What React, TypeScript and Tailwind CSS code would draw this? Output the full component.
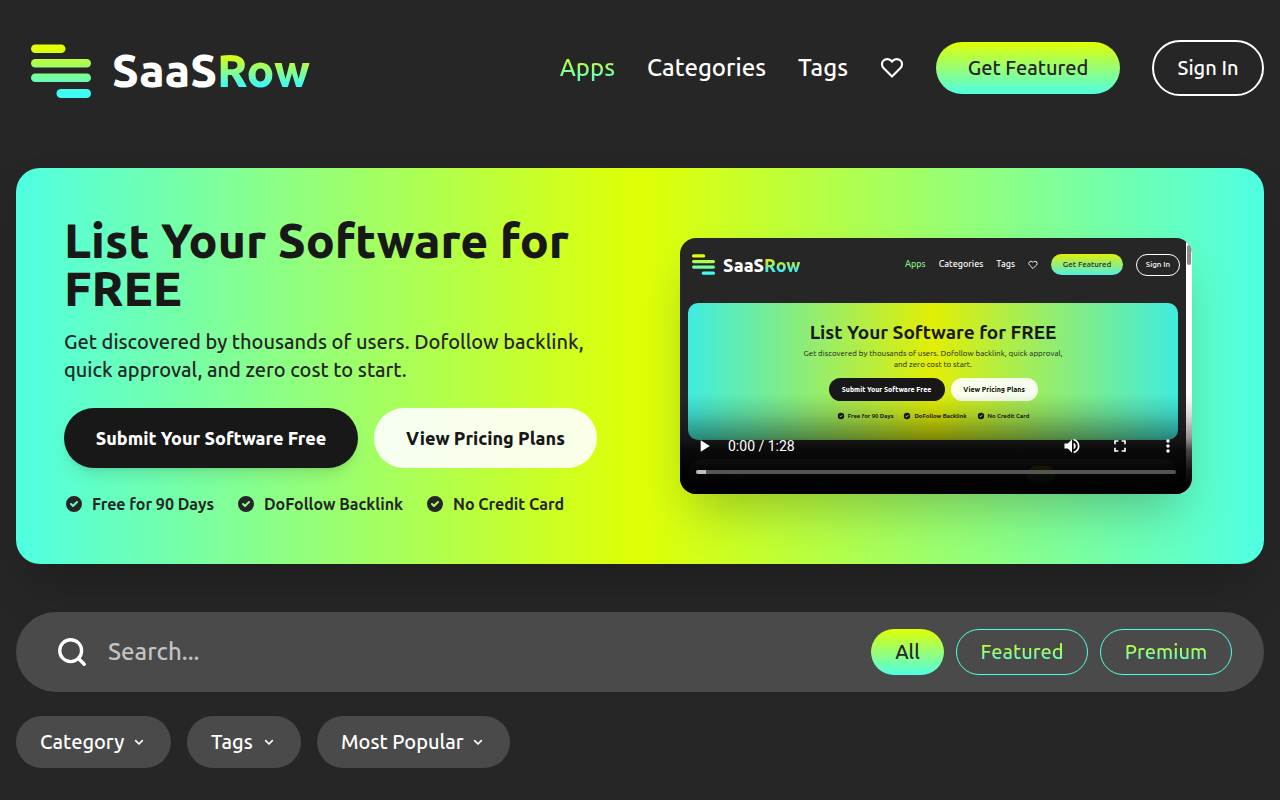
import React, { useState } from "react";

const filters = [
  { name: "All", width: "w-[73px]" },
  { name: "Featured", width: "w-[132px]" },
  { name: "Premium", width: "w-[132px]" },
];

const dropdowns = [
  { label: "Category", width: "w-[155px]", options: ["Category", "Marketing", "Design"] },
  { label: "Tags", width: "w-[114px]", options: ["Tags", "AI", "Free"] },
  { label: "Most Popular", width: "w-[193px]", options: ["Most Popular", "Newest"] },
];

const perks = ["Free for 90 Days", "DoFollow Backlink", "No Credit Card"];

function LogoMark({ className, id }: { className: string; id: string }) {
  return (
    <svg viewBox="0 0 60 54" className={className} fill={`url(#${id})`} aria-hidden="true">
      <defs>
        <linearGradient id={id} gradientUnits="userSpaceOnUse" x1="0" y1="0" x2="0" y2="54">
          <stop offset="0.1" stopColor="#E0FF04" />
          <stop offset="0.9" stopColor="#3EFBF5" />
        </linearGradient>
      </defs>
      <rect x="0" y="0.5" width="34.5" height="8.5" rx="4.25" />
      <rect x="0" y="15" width="60" height="8.5" rx="4.25" />
      <rect x="0" y="29.5" width="60" height="8.5" rx="4.25" />
      <rect x="25.5" y="45" width="34.5" height="9" rx="4.5" />
    </svg>
  );
}

function HeartIcon({ className }: { className: string }) {
  return (
    <svg viewBox="-0.5 -0.2 25 25" className={className} fill="none" stroke="currentColor" strokeWidth="2.2" strokeLinecap="round" strokeLinejoin="round" aria-hidden="true">
      <path d="M20.84 4.61a5.5 5.5 0 0 0-7.78 0L12 5.67l-1.06-1.06a5.5 5.5 0 0 0-7.78 7.78l1.06 1.06L12 21.23l7.78-7.78 1.06-1.06a5.5 5.5 0 0 0 0-7.78z" />
    </svg>
  );
}

function CheckIcon({ className }: { className: string }) {
  return (
    <svg viewBox="0 0 20 20" className={className} fill="currentColor" aria-hidden="true">
      <path
        fillRule="evenodd"
        clipRule="evenodd"
        d="M10 18a8 8 0 100-16 8 8 0 000 16zm3.707-9.293a1 1 0 00-1.414-1.414L9 10.586 7.707 9.293a1 1 0 00-1.414 1.414l2 2a1 1 0 001.414 0l4-4z"
      />
    </svg>
  );
}

function PlayerIcon({ d }: { d: string }) {
  return (
    <svg viewBox="0 0 24 24" className="size-5" fill="currentColor" aria-hidden="true">
      <path d={d} />
    </svg>
  );
}

function Header() {
  return (
    <header className="flex h-[136px] items-center justify-between px-4">
      <a href="#" className="flex items-center gap-[21px] pt-1.5 pl-[15px]">
        <LogoMark id="logo" className="h-[54px] w-[60px]" />
        <span className="pb-0.5 text-[46px] leading-[52px] font-extrabold text-white">
          SaaS
          <span className="bg-linear-to-b/srgb from-[#E0FF04] from-20% to-[#3EFBF5] to-80% bg-clip-text text-transparent">Row</span>
        </span>
      </a>
      <nav className="flex items-center gap-8 text-2xl text-white">
        <a href="#" className="bg-linear-to-b/srgb from-[#E0FF04] to-[#4FFFE3] bg-clip-text text-transparent">Apps</a>
        <a href="#">Categories</a>
        <a href="#">Tags</a>
        <a href="#" aria-label="Favorites">
          <HeartIcon className="size-6" />
        </a>
        <button className="h-[52px] w-[184px] rounded-full bg-linear-to-b/srgb from-[#E0FF04] to-[#4FFFE3] text-xl text-[#262626]">
          Get Featured
        </button>
        <button className="h-14 w-28 rounded-full border-2 border-white text-xl">Sign In</button>
      </nav>
    </header>
  );
}

// the page as it shows in the first frame of the demo video
function VideoFrame() {
  return (
    <div className="flex h-full bg-[#262626]">
      <div className="min-w-0 flex-1 px-2">
        <div className="-mr-0.5 flex h-[65px] items-center justify-between pb-3">
          <div className="flex items-center gap-2 pl-1">
            <LogoMark id="frame-logo" className="h-[21px] w-[23px]" />
            <span className="text-[18px] leading-5 font-extrabold text-white">
              SaaS
              <span className="bg-linear-to-b/srgb from-[#E0EF04] from-20% to-[#3EEBF5] to-80% bg-clip-text text-transparent">Row</span>
            </span>
          </div>
          <div className="flex items-center gap-[13px] text-[9px] text-white">
            <span className="text-[#88e87f]">Apps</span>
            <span>Categories</span>
            <span>Tags</span>
            <HeartIcon className="size-[10px]" />
            <span className="flex h-[21px] w-[72px] items-center justify-center rounded-full bg-linear-to-b/srgb from-[#E0EF04] to-[#4FEFE3] text-[8px] text-[#262626]">
              Get Featured
            </span>
            <span className="flex h-[22px] w-[44px] items-center justify-center rounded-full border border-white text-[8px]">Sign In</span>
          </div>
        </div>
        <div className="flex h-[137px] flex-col items-center rounded-[10px] bg-linear-to-r/srgb from-[#3fece0] via-[#e2ee04] to-[#3fece0] pt-[17px] text-[#181818]">
          <div className="text-[19px] leading-6 font-bold">List Your Software for FREE</div>
          <div className="pt-1 text-center text-[8px] leading-[11px] font-normal">
            Get discovered by thousands of users. Dofollow backlink, quick approval,
            <br />
            and zero cost to start.
          </div>
          <div className="mt-2 flex gap-[6px] text-[7px] font-extrabold">
            <span className="flex h-[23px] w-[116px] items-center justify-center rounded-full bg-[#181818] text-white">Submit Your Software Free</span>
            <span className="flex h-[23px] w-[87px] items-center justify-center rounded-full bg-white/90">View Pricing Plans</span>
          </div>
          <div className="mt-[11px] flex gap-[10px] text-[6px] leading-2 font-bold">
            {perks.map((perk) => (
              <span key={perk} className="flex items-center gap-[3px]">
                <CheckIcon className="size-2" />
                {perk}
              </span>
            ))}
          </div>
        </div>
        <div className="mt-[19px] flex h-[31px] items-center rounded-full bg-[#4a4a4a] pl-10 text-[9px] text-white/60">
          <span className="flex-1">Search...</span>
          <span className="mr-[123px] h-[18px] w-7 rounded-full bg-linear-to-b/srgb from-[#E0EF04] to-[#4FEFE3]" />
        </div>
      </div>
      <div className="w-[6px] bg-white pt-[7px]">
        <div className="ml-px h-5 w-1 rounded-full bg-[#8b8b8b]" />
      </div>
    </div>
  );
}

function VideoPlayer() {
  const [time, setTime] = useState(2);

  return (
    <div className="relative h-64 w-full max-w-lg overflow-hidden rounded-2xl shadow-2xl">
      <VideoFrame />
      <div className="absolute inset-x-0 bottom-0 flex h-[100px] flex-col justify-end bg-[linear-gradient(to_top,#000_5%,rgb(0_0_0/0.92)_24%,rgb(0_0_0/0.72)_44%,rgb(0_0_0/0.42)_56%,rgb(0_0_0/0.14)_80%,transparent)] text-white">
        <div className="flex h-12 items-center">
          <button aria-label="Play" className="flex size-12 items-center justify-center">
            <PlayerIcon d="M8 5v14l11-7z" />
          </button>
          <span className="flex-1 font-['Roboto',sans-serif] text-sm font-normal">0:00 / 1:28</span>
          <button aria-label="Mute" className="flex size-12 items-center justify-center">
            <PlayerIcon d="M3 9v6h4l5 5V4L7 9H3zm13.5 3c0-1.77-1.02-3.29-2.5-4.03v8.05c1.48-.73 2.5-2.25 2.5-4.02zM14 3.23v2.06c2.89.86 5 3.54 5 6.71s-2.11 5.85-5 6.71v2.06c4.01-.91 7-4.49 7-8.77s-2.99-7.86-7-8.77z" />
          </button>
          <button aria-label="Full screen" className="flex size-12 items-center justify-center">
            <PlayerIcon d="M7 14H5v5h5v-2H7v-3zm-2-4h2V7h3V5H5v5zm12 7h-3v2h5v-5h-2v3zM14 5v2h3v3h2V5h-5z" />
          </button>
          <button aria-label="More options" className="flex size-12 items-center justify-center">
            <PlayerIcon d="M12 8c1.1 0 2-.9 2-2s-.9-2-2-2-2 .9-2 2 .9 2 2 2zm0 2c-1.1 0-2 .9-2 2s.9 2 2 2 2-.9 2-2-.9-2-2-2zm0 6c-1.1 0-2 .9-2 2s.9 2 2 2 2-.9 2-2-.9-2-2-2z" />
          </button>
        </div>
        <input
          type="range"
          aria-label="Seek"
          min={0}
          max={100}
          value={time}
          onChange={(e) => setTime(Number(e.target.value))}
          className="mx-4 mb-5 h-1 appearance-none rounded-full bg-[#555555] [&::-webkit-slider-thumb]:h-1 [&::-webkit-slider-thumb]:w-0 [&::-webkit-slider-thumb]:appearance-none"
          style={{ backgroundImage: `linear-gradient(to right, #bdbdbd ${time}%, transparent ${time}%)` }}
        />
      </div>
    </div>
  );
}

function Hero() {
  return (
    <section className="mx-4 mt-8 grid grid-cols-2 items-center gap-8 rounded-3xl bg-linear-to-r/srgb from-[#4FFFE3] via-[#E0FF04] to-[#4FFFE3] p-12 shadow-2xl">
      <div>
        <h1 className="text-5xl leading-[48px] font-extrabold text-[#181818]">List Your Software for FREE</h1>
        <p className="mt-4 text-xl leading-7 text-[#262626]">
          Get discovered by thousands of users. Dofollow backlink, quick approval, and zero cost to start.
        </p>
        <div className="mt-6 flex gap-4 text-lg font-extrabold">
          <button className="h-[60px] w-[294px] rounded-full bg-[#181818] text-white shadow-lg">Submit Your Software Free</button>
          <button className="h-[60px] w-[223px] rounded-full bg-white/90 text-[#181818]">View Pricing Plans</button>
        </div>
        <ul className="mt-6 flex gap-[22px] text-base leading-6 font-semibold text-[#262626]">
          {perks.map((perk) => (
            <li key={perk} className="flex items-center gap-2">
              <CheckIcon className="size-5" />
              {perk}
            </li>
          ))}
        </ul>
      </div>
      <div className="flex justify-center">
        <VideoPlayer />
      </div>
    </section>
  );
}

function SearchBar() {
  const [active, setActive] = useState("All");
  const [query, setQuery] = useState("");

  return (
    <section className="mx-4 mt-12">
      <div className="flex h-20 items-center rounded-full bg-[#4a4a4a] pr-8 pl-10">
        <svg viewBox="0 0 24 24" className="size-8 text-white" fill="none" stroke="currentColor" strokeWidth="2.5" strokeLinecap="round" aria-hidden="true">
          <circle cx="11" cy="11" r="8.2" />
          <path d="m21.2 21.2-4.5-4.5" />
        </svg>
        <input
          type="text"
          aria-label="Search"
          placeholder="Search..."
          value={query}
          onChange={(e) => setQuery(e.target.value)}
          className="ml-5 min-w-0 flex-1 bg-transparent text-2xl text-white outline-none placeholder:text-[#c3c3c3]"
        />
        <div className="flex gap-3 text-xl">
          {filters.map((f) => (
            <button
              key={f.name}
              onClick={() => setActive(f.name)}
              className={`h-[46px] rounded-full ${f.width} ${
                active === f.name ? "bg-linear-to-b/srgb from-[#E0FF04] to-[#4FFFE3] text-[#262626]" : "border border-[#4FFFE3]"
              }`}
            >
              {active === f.name ? (
                f.name
              ) : (
                <span className="bg-linear-to-b/srgb from-[#E0FF04] to-[#4FFFE3] bg-clip-text text-transparent">{f.name}</span>
              )}
            </button>
          ))}
        </div>
      </div>

      <div className="mt-6 flex gap-4">
        {dropdowns.map((d) => (
          <div key={d.label} className={`relative ${d.width}`}>
            <select aria-label={d.label} className="h-[52px] w-full appearance-none rounded-full bg-[#4a4a4a] pr-6 pl-6 text-xl text-white outline-none">
              {d.options.map((o) => (
                <option key={o}>{o}</option>
              ))}
            </select>
            <svg viewBox="0 0 24 24" className="pointer-events-none absolute top-[18px] right-6 size-4 text-white" fill="none" stroke="currentColor" strokeWidth="2.5" strokeLinecap="round" strokeLinejoin="round" aria-hidden="true">
              <path d="m7 10 5 5 5-5" />
            </svg>
          </div>
        ))}
      </div>
    </section>
  );
}

export default function App() {
  return (
    <div className="min-h-screen bg-[#262626] pb-8 font-['Ubuntu','Noto_Sans',sans-serif] font-medium">
      <Header />
      <Hero />
      <SearchBar />
    </div>
  );
}
